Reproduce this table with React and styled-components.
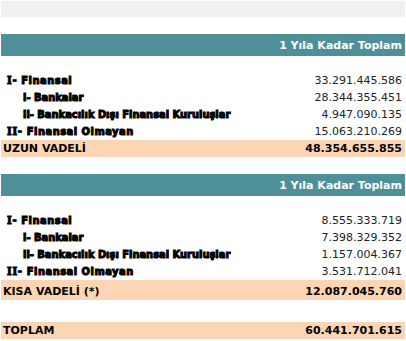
import React from "react";
import styled, { createGlobalStyle } from "styled-components";

const Global = createGlobalStyle`
  html, body { margin: 0; padding: 0; background: #fff; }
  body { font-family: "DejaVu Sans", Verdana, sans-serif; }
`;

const Page = styled.div`
  width: 406px;
  height: 341px;
  box-sizing: border-box;
  padding: 1px 1px 0 1px;
  display: flex;
  flex-direction: column;
  overflow: hidden;
`;

const TopBar = styled.div`
  height: 16px;
  background: #f0f0f0;
`;

const Spacer = styled.div`
  height: ${(p) => p.$h}px;
  flex: none;
`;

const HeaderRow = styled.div`
  height: 22px;
  flex: none;
  background: #4f8f97;
  color: #fff;
  font-weight: bold;
  font-size: 11px;
  display: flex;
  justify-content: flex-end;
  align-items: flex-end;
  padding: 0 3px 4px 0;
  box-sizing: border-box;
  line-height: 13px;
`;

const Row = styled.div`
  height: ${(p) => p.$h || 17}px;
  flex: none;
  display: flex;
  justify-content: space-between;
  align-items: flex-end;
  box-sizing: border-box;
  padding: 0 3px ${(p) => p.$pb ?? 2}px ${(p) => p.$indent}px;
  background: ${(p) => (p.$total ? "#fcd5b4" : "transparent")};
  line-height: 13px;
  font-size: 11px;
`;

const HeavyLabel = styled.span`
  font-family: "DejaVu Sans Condensed", "DejaVu Sans", sans-serif;
  font-weight: bold;
  font-stretch: condensed;
  color: #000;
  -webkit-text-stroke: 1px #000;
  letter-spacing: ${(p) => p.$ls || 0}px;
  white-space: nowrap;
`;

const Numeral = styled.span`
  font-family: "DejaVu Serif", serif;
  font-weight: bold;
  font-size: 11px;
  letter-spacing: 0.8px;
  margin-right: 4px;
  -webkit-text-stroke: 1px #000;
`;

const TotalLabel = styled.span`
  font-weight: bold;
  color: #000;
  white-space: nowrap;
`;

const Value = styled.span`
  color: ${(p) => (p.$bold ? "#000" : "#222")};
  font-weight: ${(p) => (p.$bold ? "bold" : "normal")};
  white-space: nowrap;
`;

const sections = [
  {
    items: [
      ["I-", "Finansal", "33.291.445.586", 6, 0.5],
      ["", "i- Bankalar", "28.344.355.451", 22, 0],
      ["", "ii- Bankacılık Dışı Finansal Kuruluşlar", "4.947.090.135", 22, 0],
      ["II-", "Finansal Olmayan", "15.063.210.269", 6, 0.5],
    ],
    total: ["UZUN VADELİ", "48.354.655.855"],
    totalH: 17,
  },
  {
    items: [
      ["I-", "Finansal", "8.555.333.719", 6, 0.5],
      ["", "i- Bankalar", "7.398.329.352", 22, 0],
      ["", "ii- Bankacılık Dışı Finansal Kuruluşlar", "1.157.004.367", 22, 0],
      ["II-", "Finansal Olmayan", "3.531.712.041", 6, 0.5],
    ],
    total: ["KISA VADELİ (*)", "12.087.045.760"],
    totalH: 20,
  },
];

function Section({ data }) {
  return (
    <>
      <HeaderRow>1 Yıla Kadar Toplam</HeaderRow>
      <Spacer $h={16} />
      {data.items.map(([numeral, label, value, indent, ls], i) => (
        <Row key={i} $indent={indent}>
          <HeavyLabel $ls={ls}>
            {numeral && <Numeral>{numeral}</Numeral>}
            {label}
          </HeavyLabel>
          <Value>{value}</Value>
        </Row>
      ))}
      <Row $total $indent={2} $h={data.totalH}>
        <TotalLabel>{data.total[0]}</TotalLabel>
        <Value $bold>{data.total[1]}</Value>
      </Row>
    </>
  );
}

export default function App() {
  return (
    <>
      <Global />
      <Page>
        <TopBar />
        <Spacer $h={17} />
        <Section data={sections[0]} />
        <Spacer $h={17} />
        <Section data={sections[1]} />
        <Spacer $h={22} />
        <Row $total $indent={2} $h={17}>
          <TotalLabel>TOPLAM</TotalLabel>
          <Value $bold>60.441.701.615</Value>
        </Row>
      </Page>
    </>
  );
}
